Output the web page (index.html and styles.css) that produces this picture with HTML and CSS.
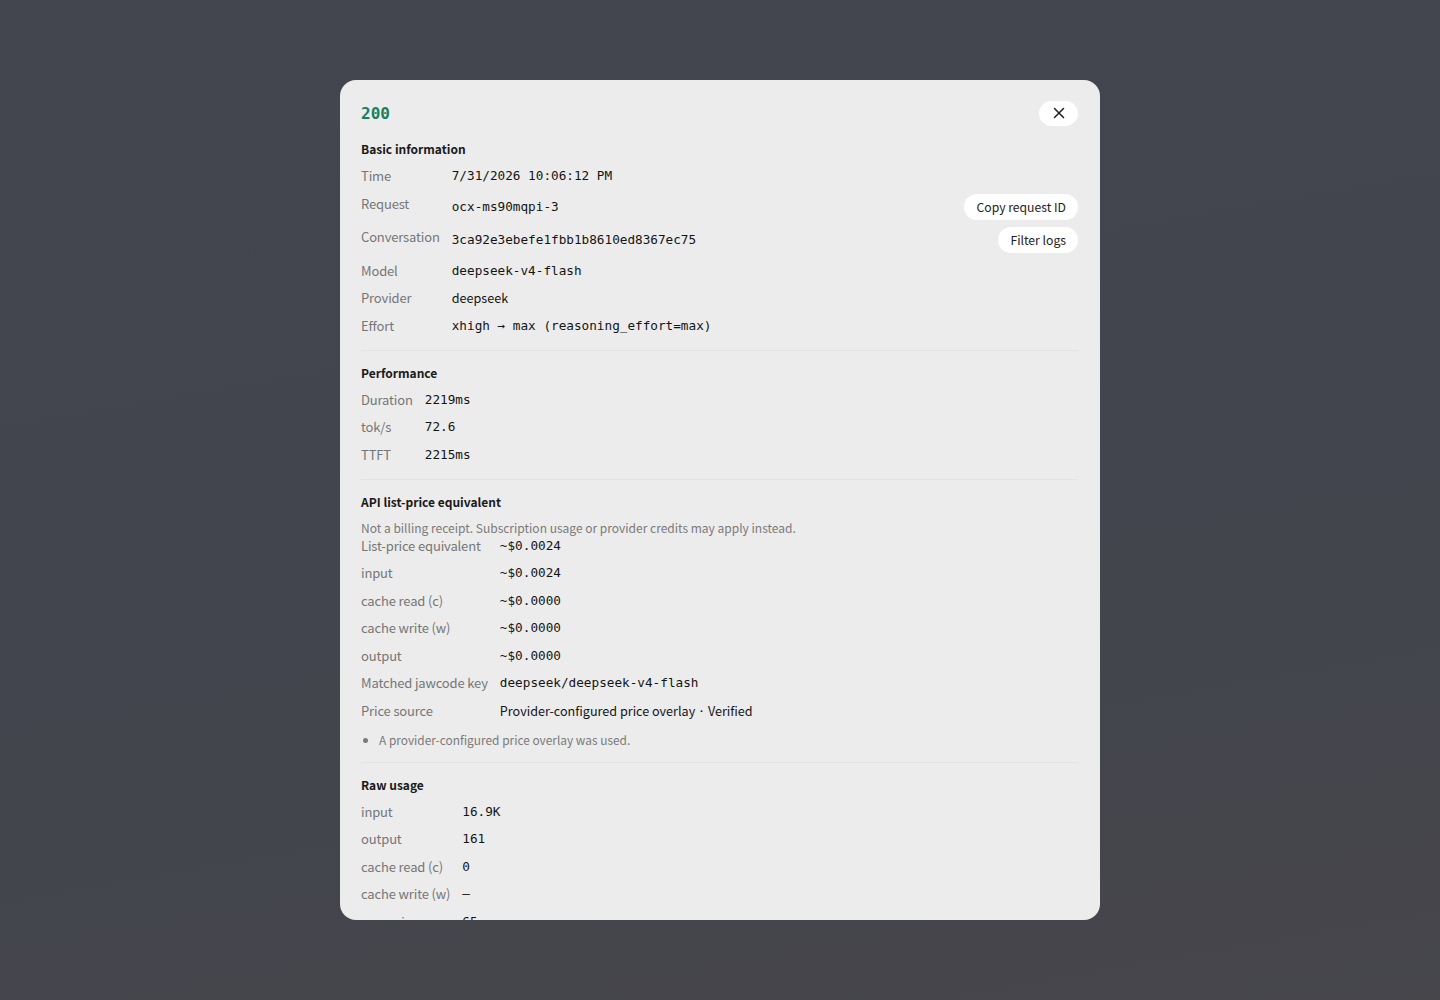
FILE: index.html
```html
<!DOCTYPE html>
<html lang="en">
    <head>
        <meta charset="UTF-8">
        <title> Request details </title>
        <link rel="stylesheet" href="styles.css">
    </head>

    <body>
        <div class="backdrop">
            <div class="modal">
                <div class="modal-head">
                    <span class="status">200</span>
                    <button class="pill close" aria-label="Close">
                        <svg width="12" height="12" viewBox="0 0 12 12">
                            <path d="M1.5 1.5 L10.5 10.5 M10.5 1.5 L1.5 10.5" stroke="#1f1f1f" stroke-width="1.5" stroke-linecap="round"/>
                        </svg>
                    </button>
                </div>

                <div class="section">
                    <h3>Basic information</h3>
                    <div class="rows">
                        <span class="label">Time</span>
                        <span class="value">7/31/2026 10:06:12 PM</span>

                        <span class="label">Request</span>
                        <span class="value with-action">
                            <span>ocx-ms90mqpi-3</span>
                            <button class="pill">Copy request ID</button>
                        </span>

                        <span class="label">Conversation</span>
                        <span class="value with-action">
                            <span>3ca92e3ebefe1fbb1b8610ed8367ec75</span>
                            <button class="pill">Filter logs</button>
                        </span>

                        <span class="label">Model</span>
                        <span class="value">deepseek-v4-flash</span>

                        <span class="label">Provider</span>
                        <span class="value plain">deepseek</span>

                        <span class="label">Effort</span>
                        <span class="value">xhigh → max (reasoning_effort=max)</span>
                    </div>
                </div>

                <div class="section">
                    <h3>Performance</h3>
                    <div class="rows">
                        <span class="label">Duration</span>
                        <span class="value">2219ms</span>
                        <span class="label">tok/s</span>
                        <span class="value">72.6</span>
                        <span class="label">TTFT</span>
                        <span class="value">2215ms</span>
                    </div>
                </div>

                <div class="section">
                    <h3>API list-price equivalent</h3>
                    <p class="note">Not a billing receipt. Subscription usage or provider credits may apply instead.</p>
                    <div class="rows">
                        <span class="label">List-price equivalent</span>
                        <span class="value">~$0.0024</span>
                        <span class="label">input</span>
                        <span class="value">~$0.0024</span>
                        <span class="label">cache read (c)</span>
                        <span class="value">~$0.0000</span>
                        <span class="label">cache write (w)</span>
                        <span class="value">~$0.0000</span>
                        <span class="label">output</span>
                        <span class="value">~$0.0000</span>
                        <span class="label">Matched jawcode key</span>
                        <span class="value">deepseek/deepseek-v4-flash</span>
                        <span class="label">Price source</span>
                        <span class="value plain">Provider-configured price overlay · Verified</span>
                    </div>
                    <ul class="notes">
                        <li>A provider-configured price overlay was used.</li>
                    </ul>
                </div>

                <div class="section">
                    <h3>Raw usage</h3>
                    <div class="rows">
                        <span class="label">input</span>
                        <span class="value">16.9K</span>
                        <span class="label">output</span>
                        <span class="value">161</span>
                        <span class="label">cache read (c)</span>
                        <span class="value">0</span>
                        <span class="label">cache write (w)</span>
                        <span class="value">–</span>
                        <span class="label">reasoning</span>
                        <span class="value">65</span>
                    </div>
                </div>
            </div>
        </div>
    </body>
</html>
```

FILE: styles.css
```css
* {
    padding: 0;
    margin: 0;
    box-sizing: border-box;
}

body {
    font-family: "Noto Sans CJK KR", "Noto Sans", sans-serif;
    background: #43464e;
}

.backdrop {
    height: 100vh;
    display: flex;
    align-items: center;
    justify-content: center;
    background: linear-gradient(170deg, #43464f 0%, #42454d 55%, #46464b 100%);
}

.modal {
    width: 760px;
    height: 840px;
    overflow: hidden;
    background: #ececec;
    border-radius: 16px;
    padding: 20px 22px 0 21px;
}

.modal-head {
    display: flex;
    justify-content: space-between;
    align-items: center;
    height: 26px;
}

.status {
    font-family: "DejaVu Sans Mono", monospace;
    font-weight: bold;
    font-size: 16px;
    color: #15805e;
}

.pill {
    border: none;
    background: #fff;
    border-radius: 13px;
    height: 26px;
    padding: 0 12px;
    font-family: "Noto Sans CJK KR", "Noto Sans", sans-serif;
    font-size: 12.2px;
    line-height: 26px;
    color: #222;
    display: inline-flex;
    align-items: center;
}

.pill.close {
    width: 39px;
    height: 25px;
    justify-content: center;
    padding: 0;
}

.section {
    padding: 13px 0 14px;
    border-bottom: 1px solid #e3e3e3;
}

.modal-head + .section {
    padding-top: 14px;
}

h3 {
    font-size: 12px;
    font-weight: bold;
    color: #1a1a1a;
    line-height: 18px;
    margin-bottom: 8px;
}

.rows {
    display: grid;
    grid-template-columns: max-content 1fr;
    column-gap: 12px;
    row-gap: 7.5px;
    align-items: start;
}

.label {
    font-size: 13px;
    letter-spacing: -0.15px;
    line-height: 20px;
    color: #767676;
}

.value {
    font-family: "DejaVu Sans Mono", monospace;
    font-size: 12.7px;
    line-height: 20px;
    color: #141414;
}

.value.plain {
    font-family: "Noto Sans CJK KR", "Noto Sans", sans-serif;
    font-size: 12.6px;
}

.value.with-action {
    display: flex;
    justify-content: space-between;
    align-items: center;
    min-height: 26px;
}

.note {
    font-size: 12px;
    line-height: 17px;
    color: #7a7a7a;
}

.notes {
    margin-top: 10px;
    padding-left: 18px;
    font-size: 11.9px;
    line-height: 17px;
    color: #7a7a7a;
}
```
